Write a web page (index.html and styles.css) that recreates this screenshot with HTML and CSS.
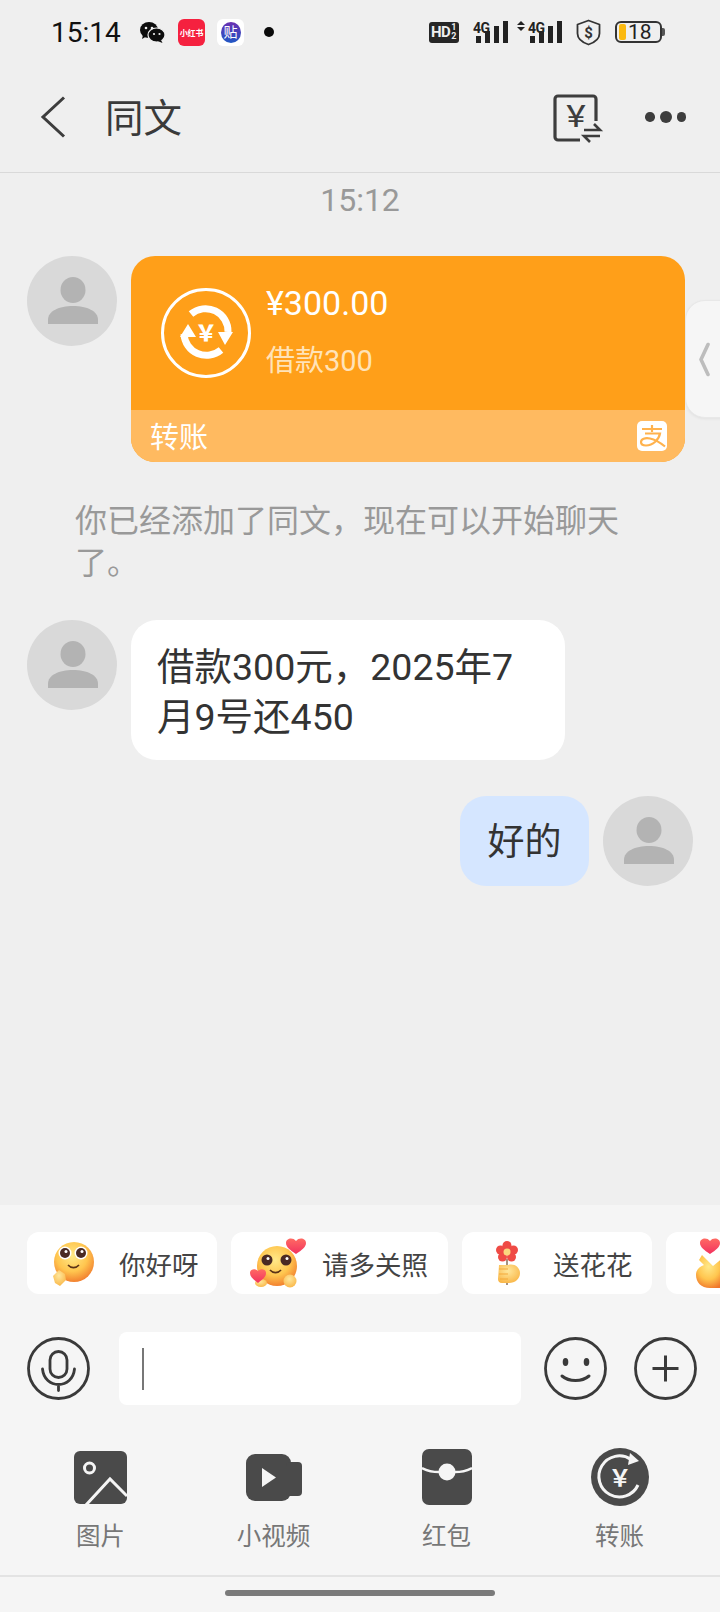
FILE: index.html
```html
<!DOCTYPE html>
<html lang="zh">
<head>
<meta charset="utf-8">
<title>同文</title>
<link rel="stylesheet" href="styles.css">
</head>
<body>
<div class="page">
  <svg width="0" height="0" class="defs">
    <defs>
      <radialGradient id="face" cx="45%" cy="35%" r="70%">
        <stop offset="0" stop-color="#ffe989"/><stop offset=".55" stop-color="#ffc64f"/><stop offset="1" stop-color="#f0752a"/>
      </radialGradient>
      <radialGradient id="hand" cx="45%" cy="35%" r="70%">
        <stop offset="0" stop-color="#ffe79c"/><stop offset="1" stop-color="#f9b545"/>
      </radialGradient>
      <linearGradient id="heart" x1="0" y1="0" x2="0" y2="1">
        <stop offset="0" stop-color="#ff6a63"/><stop offset="1" stop-color="#f2325f"/>
      </linearGradient>
      <symbol id="avatar" viewBox="0 0 90 90">
        <circle cx="45" cy="45" r="45" fill="#d9d9d9"/>
        <ellipse cx="46" cy="34" rx="12.5" ry="13" fill="#b3b3b3"/>
        <path d="M21 68v-4c0-9 11-14 25-14s25 5 25 14v4z" fill="#b3b3b3"/>
      </symbol>
    </defs>
  </svg>

  <header class="status">
    <div class="status-left">
      <span class="clock">15:14</span>
      <svg class="st-wechat" width="25" height="21" viewBox="0 0 25 21">
        <ellipse cx="9" cy="8" rx="9" ry="8" fill="#0d0d0d"/>
        <path d="M3 13l-1 4 5-3z" fill="#0d0d0d"/>
        <ellipse cx="16.5" cy="13" rx="8.5" ry="7" fill="#0d0d0d" stroke="#eee" stroke-width="1.2"/>
        <path d="M21 18l1.500 3-5-2z" fill="#0d0d0d"/>
        <circle cx="6" cy="6" r="1.300" fill="#eee"/><circle cx="12" cy="6" r="1.300" fill="#eee"/>
        <circle cx="14" cy="12" r="1.100" fill="#eee"/><circle cx="19.500" cy="12" r="1.100" fill="#eee"/>
      </svg>
      <span class="st-red">小红书</span>
      <span class="st-tie"><span class="st-tie-in">贴</span></span>
      <span class="st-dot"></span>
    </div>
    <div class="status-right">
      <span class="st-hd">HD<span class="st-frac"><i>1</i><i>2</i></span></span>
      <svg class="vis" width="35" height="25" viewBox="0 0 35 25">
        <text x="0" y="13" class="net">4G</text>
        <rect x="3" y="16" width="5" height="7" fill="#222"/><rect x="12" y="11" width="5" height="12" fill="#222"/>
        <rect x="21" y="6" width="5" height="17" fill="#222"/><rect x="30" y="1" width="5" height="22" fill="#222"/>
      </svg>
      <svg class="vis" width="45" height="25" viewBox="0 0 45 25">
        <path d="M0 5l4-4 4 4zM0 7h8l-4 4z" fill="#222"/>
        <text x="11" y="13" class="net">4G</text>
        <rect x="13" y="16" width="5" height="7" fill="#222"/><rect x="22" y="11" width="5" height="12" fill="#222"/>
        <rect x="31" y="6" width="5" height="17" fill="#222"/><rect x="40" y="1" width="5" height="22" fill="#222"/>
      </svg>
      <svg width="25" height="27" viewBox="0 0 25 27">
        <path d="M12.500 1.500l11 4v9c0 5.500-5 9-11 11-6-2-11-5.500-11-11v-9z" fill="none" stroke="#333" stroke-width="1.800" stroke-linejoin="round"/>
        <text x="12.500" y="18.500" class="shield">$</text>
      </svg>
      <span class="battery"><span class="batt-fill"></span><span class="batt-num">18</span><span class="batt-cap"></span></span>
    </div>
  </header>

  <nav class="topbar">
    <svg class="back" width="26" height="42" viewBox="0 0 26 42"><path d="M24 1.500L3 21l21 19.500" fill="none" stroke="#3d3d3d" stroke-width="3"/></svg>
    <h1 class="title">同文</h1>
    <svg class="bill vis" width="48" height="50" viewBox="0 0 48 50">
      <path d="M43 27V5a3 3 0 0 0-3-3H5a3 3 0 0 0-3 3v38a3 3 0 0 0 3 3h22" fill="none" stroke="#3d3d3d" stroke-width="3.200"/>
      <text x="23" y="33" class="bill-yen">￥</text>
      <path d="M31 36h16l-6-6M47 42H31l6 6" fill="none" stroke="#3d3d3d" stroke-width="2.600"/>
    </svg>
    <div class="more"><i class="dot-s"></i><i class="dot-l"></i><i class="dot-s"></i></div>
  </nav>

  <main class="chat">
    <div class="side-tab">
      <svg width="12" height="35" viewBox="0 0 12 35"><path d="M10 2.500L3 17.500l7 15" fill="none" stroke="#bdbdbd" stroke-width="3.600" stroke-linecap="round" stroke-linejoin="round"/></svg>
    </div>
    <p class="msg-time">15:12</p>

    <div class="row card-row">
      <svg class="avatar"><use href="#avatar"/></svg>
      <article class="card">
        <div class="card-main">
          <svg class="card-icon" width="90" height="90" viewBox="0 0 90 90">
            <circle cx="45" cy="45" r="43.500" fill="none" stroke="#fff" stroke-width="3"/>
            <path d="M30 26a22.500 22.500 0 0 1 37 18" fill="none" stroke="#fff" stroke-width="7"/>
            <path d="M60 62a22.500 22.500 0 0 1-37-16" fill="none" stroke="#fff" stroke-width="7"/>
            <path d="M57 44h15l-8 13zM35 49H19l8-13z" fill="#fff"/>
            <text x="45" y="53" class="card-yen">￥</text>
          </svg>
          <div class="card-text">
            <div class="card-amount">¥300.00</div>
            <div class="card-note">借款300</div>
          </div>
        </div>
        <div class="card-foot">
          <span>转账</span>
          <svg class="ali" width="30" height="30" viewBox="0 0 30 30">
            <rect width="30" height="30" rx="5" fill="#fff"/>
            <path d="M15 4v7M5 8h20M8 12.500h15c-1 6-7 12-14 12-3 0-5-1.500-5-3.500 0-3 4-4.500 9-3.500 5 1 10 4 15 8" fill="none" stroke="#ffb24d" stroke-width="2.200"/>
          </svg>
        </div>
      </article>
    </div>

    <p class="system">你已经添加了同文，现在可以开始聊天了。</p>

    <div class="row text-row">
      <svg class="avatar"><use href="#avatar"/></svg>
      <div class="bubble">借款300元，2025年7月9号还450</div>
    </div>

    <div class="row mine-row">
      <div class="bubble-mine">好的</div>
      <svg class="avatar"><use href="#avatar"/></svg>
    </div>
  </main>

  <section class="panel">
    <div class="chips">
      <div class="chip chip-a">
        <svg class="emoji" width="42" height="46" viewBox="0 0 42 46">
          <circle cx="22" cy="22" r="20" fill="url(#face)"/>
          <circle cx="13" cy="13" r="6.500" fill="#fff"/><circle cx="29" cy="13" r="6.500" fill="#fff"/>
          <circle cx="13" cy="13" r="5" fill="#4a2a24"/><circle cx="29" cy="13" r="5" fill="#4a2a24"/>
          <circle cx="14" cy="11.500" r="1.500" fill="#fff"/><circle cx="30" cy="11.500" r="1.500" fill="#fff"/>
          <path d="M16 25c3 3.500 8 3.500 11 0" fill="none" stroke="#5b3317" stroke-width="1.600"/>
          <path d="M1 36l6-6 6 4 1 6-6 6-5-3z" fill="url(#hand)"/>
        </svg>
        <span>你好呀</span>
      </div>
      <div class="chip chip-b">
        <svg class="emoji" width="56" height="50" viewBox="0 0 56 50">
          <circle cx="27" cy="28" r="20" fill="url(#face)"/>
          <circle cx="17" cy="22" r="5.500" fill="#4a2a24"/><circle cx="36" cy="22" r="5.500" fill="#4a2a24"/>
          <circle cx="18" cy="20.500" r="1.500" fill="#fff"/><circle cx="37" cy="20.500" r="1.500" fill="#fff"/>
          <path d="M20 32c3 3.500 8 3.500 11 0" fill="none" stroke="#5b3317" stroke-width="1.600"/>
          <ellipse cx="11" cy="45" rx="6" ry="4" fill="url(#hand)"/><circle cx="40" cy="43" r="6.500" fill="url(#hand)"/>
          <path d="M46 16c-6-4-10-7-10-11 0-5 7-6 10-2 3-4 10-3 10 2 0 4-4 7-10 11z" fill="url(#heart)"/>
          <path d="M8 45C3 41 0 39 0 35c0-4 5-5 8-2 3-3 8-2 8 2 0 4-3 6-8 10z" fill="url(#heart)"/>
        </svg>
        <span>请多关照</span>
      </div>
      <div class="chip chip-c">
        <svg class="emoji" width="24" height="44" viewBox="0 0 24 44">
          <path d="M11 18v26" stroke="#6b4a2a" stroke-width="1.200"/>
          <circle cx="11" cy="4.500" r="4.500" fill="#ef4b45"/><circle cx="4.500" cy="9" r="4.500" fill="#ef4b45"/><circle cx="17.500" cy="9" r="4.500" fill="#ef4b45"/><circle cx="6.500" cy="16" r="4.500" fill="#ef4b45"/><circle cx="15.500" cy="16" r="4.500" fill="#ef4b45"/>
          <circle cx="11" cy="11" r="3.500" fill="#fbd77e"/>
          <path d="M3 24h9c7-2 12 3 12 8 0 6-5 10-11 10H6c-3 0-4-2-4-4z" fill="url(#hand)"/>
          <path d="M3 28h9M3 33h9M4 38h8" stroke="#f4a93b" stroke-width="1"/>
        </svg>
        <span>送花花</span>
      </div>
      <div class="chip chip-d">
        <svg class="emoji" width="28" height="50" viewBox="0 0 28 50">
          <path d="M14 16C8 12 4 9 4 5c0-5 7-6 10-2 3-4 10-3 10 2 0 4-4 7-10 11z" fill="url(#heart)"/>
          <path d="M6 17l11 11 11-9v31H14C5 50 0 44 0 37c0-5 3-8 8-10l-5-5z" fill="url(#face)"/>
        </svg>
      </div>
    </div>

    <div class="input-row">
      <svg class="round-btn" viewBox="0 0 63 63">
        <circle cx="31.500" cy="31.500" r="30" fill="none" stroke="#3a3a3a" stroke-width="2.800"/>
        <rect x="23" y="14.500" width="17" height="26" rx="8.500" fill="none" stroke="#3a3a3a" stroke-width="2.800"/>
        <path d="M15.500 32c1 10 8 15.500 16 15.500s15-5.500 16-15.500M31.500 47.500v6" fill="none" stroke="#3a3a3a" stroke-width="2.800" stroke-linecap="round"/>
      </svg>
      <div class="field"><i class="caret"></i></div>
      <svg class="round-btn" viewBox="0 0 63 63">
        <circle cx="31.500" cy="31.500" r="30" fill="none" stroke="#3a3a3a" stroke-width="2.800"/>
        <ellipse cx="21.500" cy="25" rx="2.800" ry="4" fill="#3a3a3a"/><ellipse cx="42.500" cy="25" rx="2.800" ry="4" fill="#3a3a3a"/>
        <path d="M18 39c7 6 20 6 27 0" fill="none" stroke="#3a3a3a" stroke-width="3" stroke-linecap="round"/>
      </svg>
      <svg class="round-btn" viewBox="0 0 63 63">
        <circle cx="31.500" cy="31.500" r="30" fill="none" stroke="#3a3a3a" stroke-width="2.800"/>
        <path d="M18.500 31.500h26M31.500 18.500v26" fill="none" stroke="#3a3a3a" stroke-width="3"/>
      </svg>
    </div>

    <div class="tools">
      <div class="tool">
        <span class="tool-icon">
          <svg width="53" height="53" viewBox="0 0 53 53">
            <rect width="53" height="53" rx="6" fill="#4a4a4a"/>
            <circle cx="15.500" cy="17" r="5" fill="none" stroke="#f5f5f5" stroke-width="3"/>
            <path d="M12 54l24-26 17 17" fill="none" stroke="#f5f5f5" stroke-width="3"/>
          </svg>
        </span>
        <span class="tool-label">图片</span>
      </div>
      <div class="tool">
        <span class="tool-icon">
          <svg width="56" height="47" viewBox="0 0 56 47">
            <rect width="45" height="47" rx="9" fill="#4a4a4a"/>
            <rect x="40" y="8" width="16" height="34" rx="4" fill="#4a4a4a"/>
            <path d="M16 14l14 9.500-14 9.500z" fill="#f5f5f5"/>
          </svg>
        </span>
        <span class="tool-label">小视频</span>
      </div>
      <div class="tool">
        <span class="tool-icon">
          <svg width="50" height="56" viewBox="0 0 50 56">
            <rect width="50" height="56" rx="7" fill="#4a4a4a"/>
            <path d="M0 19c6 3 11 4 17 4M50 19c-6 3-11 4-17 4" fill="none" stroke="#f5f5f5" stroke-width="2.500"/>
            <circle cx="25" cy="23" r="8.500" fill="#f5f5f5"/>
          </svg>
        </span>
        <span class="tool-label">红包</span>
      </div>
      <div class="tool">
        <span class="tool-icon">
          <svg width="58" height="58" viewBox="0 0 58 58">
            <circle cx="29" cy="29" r="29" fill="#4a4a4a"/>
            <path d="M47 37A20.500 20.500 0 1 1 40 11.500" fill="none" stroke="#f5f5f5" stroke-width="3"/>
            <path d="M39 5l9 8-11 4z" fill="#f5f5f5"/>
            <text x="29" y="38" class="tool-yen">￥</text>
          </svg>
        </span>
        <span class="tool-label">转账</span>
      </div>
    </div>

    <footer class="home"><i class="home-bar"></i></footer>
  </section>
</div>
</body>
</html>
```

FILE: styles.css
```css
* { box-sizing: border-box; }
html, body { margin: 0; padding: 0; }
body {
  width: 720px;
  height: 1612px;
  overflow: hidden;
  font-family: Roboto, "Noto Sans CJK SC", sans-serif;
  background: #efefef;
}
.page { width: 720px; height: 1612px; display: flex; flex-direction: column; }
.defs { position: absolute; }
.vis { overflow: visible; }

/* status bar */
.status { height: 64px; display: flex; justify-content: space-between; align-items: center; padding: 0 56px 0 51px; flex: none; }
.status-left, .status-right { display: flex; align-items: center; }
.clock { font-size: 28px; color: #111; width: 70px; }
.st-wechat { margin-left: 19px; }
.st-red {
  margin-left: 13px; width: 27px; height: 27px; border-radius: 6px; background: #f5213f; color: #fff;
  font-size: 8px; font-weight: 700; display: flex; align-items: center; justify-content: center; white-space: nowrap; letter-spacing: -.2px;
}
.st-tie { margin-left: 12px; width: 27px; height: 27px; border-radius: 6px; background: #fff; display: flex; align-items: center; justify-content: center; }
.st-tie-in {
  width: 20px; height: 21px; border-radius: 50%; background: linear-gradient(#6a2fb2, #1f57c4);
  color: #fff; font-size: 14px; line-height: 21px; text-align: center;
}
.st-dot { margin-left: 20px; width: 10px; height: 10px; border-radius: 50%; background: #0a0a0a; }
.status-right > svg:nth-of-type(1) { margin-left: 14px; }
.status-right > svg:nth-of-type(2) { margin-left: 9px; }
.status-right > svg:nth-of-type(3) { margin-left: 14px; }
.st-hd {
  width: 30px; height: 21px; border-radius: 3px; background: #262626; color: #eee; font-size: 15px; font-weight: 700;
  display: flex; align-items: center; padding-left: 2px; letter-spacing: -.6px;
}
.st-frac { display: flex; flex-direction: column; font-size: 9px; line-height: 9px; margin-left: 1px; }
.st-frac i { font-style: normal; }
.net { font-family: Roboto, sans-serif; font-size: 14px; font-weight: 700; fill: #222; letter-spacing: -.5px; }
.shield { font-family: Roboto, sans-serif; font-size: 15px; font-weight: 700; fill: #333; text-anchor: middle; }
.battery {
  position: relative; margin-left: 14px; margin-right: 2px; width: 47px; height: 22px; border: 2px solid #333; border-radius: 6px;
  display: flex; align-items: center;
}
.batt-fill { width: 7px; height: 16px; margin-left: 2px; border-radius: 2px; background: #fbb90f; }
.batt-num { font-size: 21px; color: #222; margin-left: 2px; line-height: 18px; }
.batt-cap { position: absolute; right: -5px; top: 5px; width: 3px; height: 8px; background: #555; border-radius: 0 2px 2px 0; }

/* top bar */
.topbar {
  height: 109px; flex: none; display: flex; align-items: center; padding: 0 34px 2px 40px;
  border-bottom: 1px solid #d9d9d9;
}
.title { margin: 4px 0 0 39px; font-size: 38.500px; font-weight: 400; color: #3a3a3a; flex: 1; line-height: 1; }
.bill { margin-top: 3px; }
.bill-yen { font-family: "Noto Sans CJK SC", sans-serif; font-size: 29px; font-weight: 500; fill: #3d3d3d; text-anchor: middle; }
.more { display: flex; align-items: center; gap: 5px; margin-left: 44px; }
.more i { display: block; border-radius: 50%; background: #3d3d3d; }
.dot-s { width: 9.500px; height: 9.500px; }
.dot-l { width: 12px; height: 12px; }

/* chat */
.chat { position: relative; flex: 1; min-height: 0; }
.msg-time { margin: 8px 0 0; font-size: 32px; line-height: 38px; color: #999; text-align: center; }
.row { display: flex; padding: 0 27px; gap: 14px; position: relative; }
.avatar { width: 90px; height: 90px; flex: none; }
.card-row { margin-top: 37px; }
.card { width: 554px; height: 206px; border-radius: 24px; overflow: hidden; background: #ff9f19; display: flex; flex-direction: column; }
.card-main { flex: 1; display: flex; align-items: flex-start; padding: 32px 0 0 30px; }
.card-text { margin-left: 15px; }
.card-amount { font-size: 34px; line-height: 40px; color: #fff; margin-top: -5px; }
.card-note { font-size: 29px; line-height: 40px; color: #ffe3b8; margin-top: 18px; }
.card-yen { font-family: "Noto Sans CJK SC", sans-serif; font-size: 22px; font-weight: 900; fill: #fff; text-anchor: middle; }
.card-foot {
  height: 52px; background: #ffba60; color: #fff; font-size: 29px; display: flex; align-items: center; justify-content: space-between;
  padding: 0 18px 2px 19px;
}
.ali { margin-top: 2px; }
.side-tab {
  position: absolute; right: -2px; top: 127px; width: 37px; height: 118px; border-radius: 20px 0 0 20px;
  background: #f6f6f6; border: 1px solid #e8e8e8; box-shadow: 0 1px 3px rgba(0, 0, 0, .06); display: flex; align-items: center; padding-left: 12px;
}
.system { margin: 38px 0 0; padding: 0 85px 0 75px; font-size: 32px; line-height: 42px; color: #999; }
.text-row { margin-top: 36px; }
.bubble {
  width: 434px; height: 140px; border-radius: 26px; background: #fff; color: #333; font-size: 37.500px; line-height: 50px;
  padding: 22px 27px 0 26px;
}
.mine-row { margin-top: 36px; justify-content: flex-end; }
.bubble-mine {
  width: 129px; height: 90px; border-radius: 26px; background: #d5e6ff; color: #333; font-size: 37px; line-height: 94px; text-align: center;
}

/* bottom panel */
.panel { flex: none; height: 407px; background: #f5f5f5; display: flex; flex-direction: column; }
.chips { display: flex; gap: 14px; margin-top: 27px; padding-left: 27px; height: 62px; overflow: hidden; flex: none; }
.chip {
  flex: none; height: 62px; border-radius: 12px; background: #fff; display: flex; align-items: center;
  font-size: 26.500px; color: #444; white-space: nowrap;
}
.chip-a { width: 190px; padding-left: 25px; }
.chip-a span { margin-left: 25px; }
.chip-b { width: 217px; padding-left: 19px; }
.chip-b span { margin-left: 16px; }
.chip-c { width: 190px; padding-left: 34px; }
.chip-c span { margin-left: 33px; }
.chip-d { width: 80px; padding-left: 30px; }
.input-row { display: flex; align-items: center; height: 73px; margin-top: 38px; padding-left: 27px; flex: none; }
.round-btn { width: 63px; height: 63px; flex: none; }
.field { width: 402px; height: 73px; margin: 0 23px 0 29px; border-radius: 8px; background: #fff; padding: 16px 0 0 23px; }
.caret { display: block; width: 2px; height: 42px; background: #777; }
.input-row .round-btn:last-child { margin-left: 27px; }
.tools { display: grid; grid-template-columns: repeat(4, 173px); padding: 42px 0 0 14px; flex: none; }
.tool { display: flex; flex-direction: column; align-items: center; }
.tool-icon { height: 60px; display: flex; align-items: center; justify-content: center; }
.tool-label { margin-top: 15px; font-size: 24.500px; line-height: 30px; color: #777; }
.tool-yen { font-family: "Noto Sans CJK SC", sans-serif; font-size: 23px; font-weight: 700; fill: #f5f5f5; text-anchor: middle; }
.home { margin-top: auto; height: 37px; border-top: 2px solid #e3e3e3; display: flex; justify-content: center; padding-top: 13px; flex: none; }
.home-bar { display: block; width: 270px; height: 6px; border-radius: 3px; background: #7a7a7a; }
```
